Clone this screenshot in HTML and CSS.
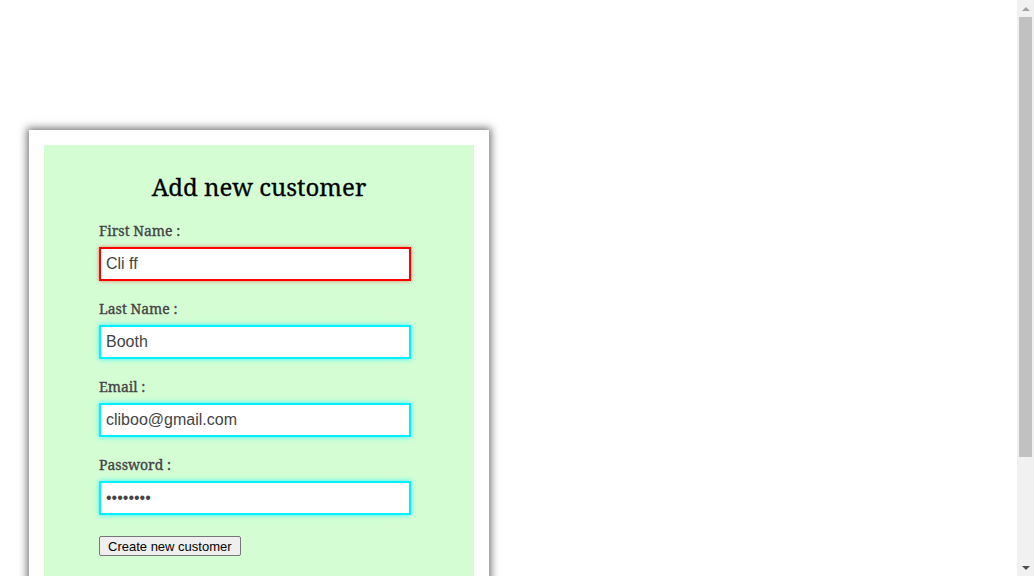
FILE: index.html
```html
<!DOCTYPE html>
<html>
<head>
<meta charset="utf-8">
<link rel="stylesheet" href="styles.css">
</head>
<body>
<div class="page">
  <div class="card">
    <div class="panel">
      <h2 class="title">Add new customer</h2>
      <form class="form">
        <div class="field">
          <label class="label">First Name :</label>
          <input class="input input-error" type="text" value="Cli ff">
        </div>
        <div class="field">
          <label class="label">Last Name :</label>
          <input class="input" type="text" value="Booth">
        </div>
        <div class="field">
          <label class="label">Email :</label>
          <input class="input" type="text" value="cliboo@gmail.com">
        </div>
        <div class="field">
          <label class="label">Password :</label>
          <input class="input" type="password" value="password">
        </div>
        <button class="button" type="button">Create new customer</button>
      </form>
    </div>
  </div>
</div>
<div class="scrollbar">
  <div class="arrow arrow-up"></div>
  <div class="track"><div class="thumb"></div></div>
  <div class="arrow arrow-down"></div>
</div>
</body>
</html>
```
FILE: styles.css
```css
html, body {
  margin: 0;
  padding: 0;
  background: #fff;
}
.page {
  padding: 130px 0 8px 29px;
}
.card {
  width: 460px;
  box-sizing: border-box;
  padding: 15px;
  background: #fff;
  box-shadow: 0 0 8px 2px rgba(0,0,0,0.55);
}
.panel {
  background: #d4fdd4;
  padding: 26px 0 120px 55px;
}
.title {
  margin: 0 0 19px 0;
  padding-right: 55px;
  text-align: center;
  font-family: "Noto Serif", "DejaVu Serif", serif;
  font-weight: normal;
  font-size: 24px;
  line-height: 32px;
  color: #000;
  -webkit-text-stroke: 0.3px #000;
}
.form {
  display: flex;
  flex-direction: column;
  align-items: flex-start;
}
.field {
  display: flex;
  flex-direction: column;
  gap: 7px;
  margin-bottom: 19px;
}
.label {
  font-family: "Noto Serif", "DejaVu Serif", serif;
  font-weight: normal;
  font-size: 14px;
  line-height: 18px;
  color: #444;
  -webkit-text-stroke: 0.35px #444;
}
.input {
  width: 312px;
  height: 34px;
  box-sizing: border-box;
  margin: 0;
  padding: 0 5px;
  border: 2px solid #00f0ff;
  box-shadow: 0 0 5px #33f5ff;
  background: #fff;
  font-family: "Liberation Sans", Arial, sans-serif;
  font-size: 16px;
  color: #444;
  outline: none;
}
.input-error {
  border-color: #ff0000;
  box-shadow: 0 0 4px rgba(255,0,0,0.5);
}
.button {
  margin-top: 2px;
  height: 20px;
  padding: 0 8px;
  font-family: "Liberation Sans", Arial, sans-serif;
  font-size: 13px;
  color: #000;
  background: #efefef;
  border: 1px solid #767676;
  border-radius: 2px;
}
.scrollbar {
  position: fixed;
  top: 0;
  right: 0;
  width: 17px;
  height: 100%;
  background: #f1f1f1;
  display: flex;
  flex-direction: column;
}
.arrow {
  height: 17px;
  display: flex;
  align-items: center;
  justify-content: center;
}
.arrow::before {
  content: "";
  width: 0;
  height: 0;
  border-left: 4px solid transparent;
  border-right: 4px solid transparent;
}
.arrow-up::before {
  border-bottom: 4px solid #a3a3a3;
}
.arrow-down::before {
  border-top: 4px solid #505050;
}
.track {
  flex: 1;
  padding: 0 2px;
}
.thumb {
  height: 440px;
  background: #c1c1c1;
}
```
